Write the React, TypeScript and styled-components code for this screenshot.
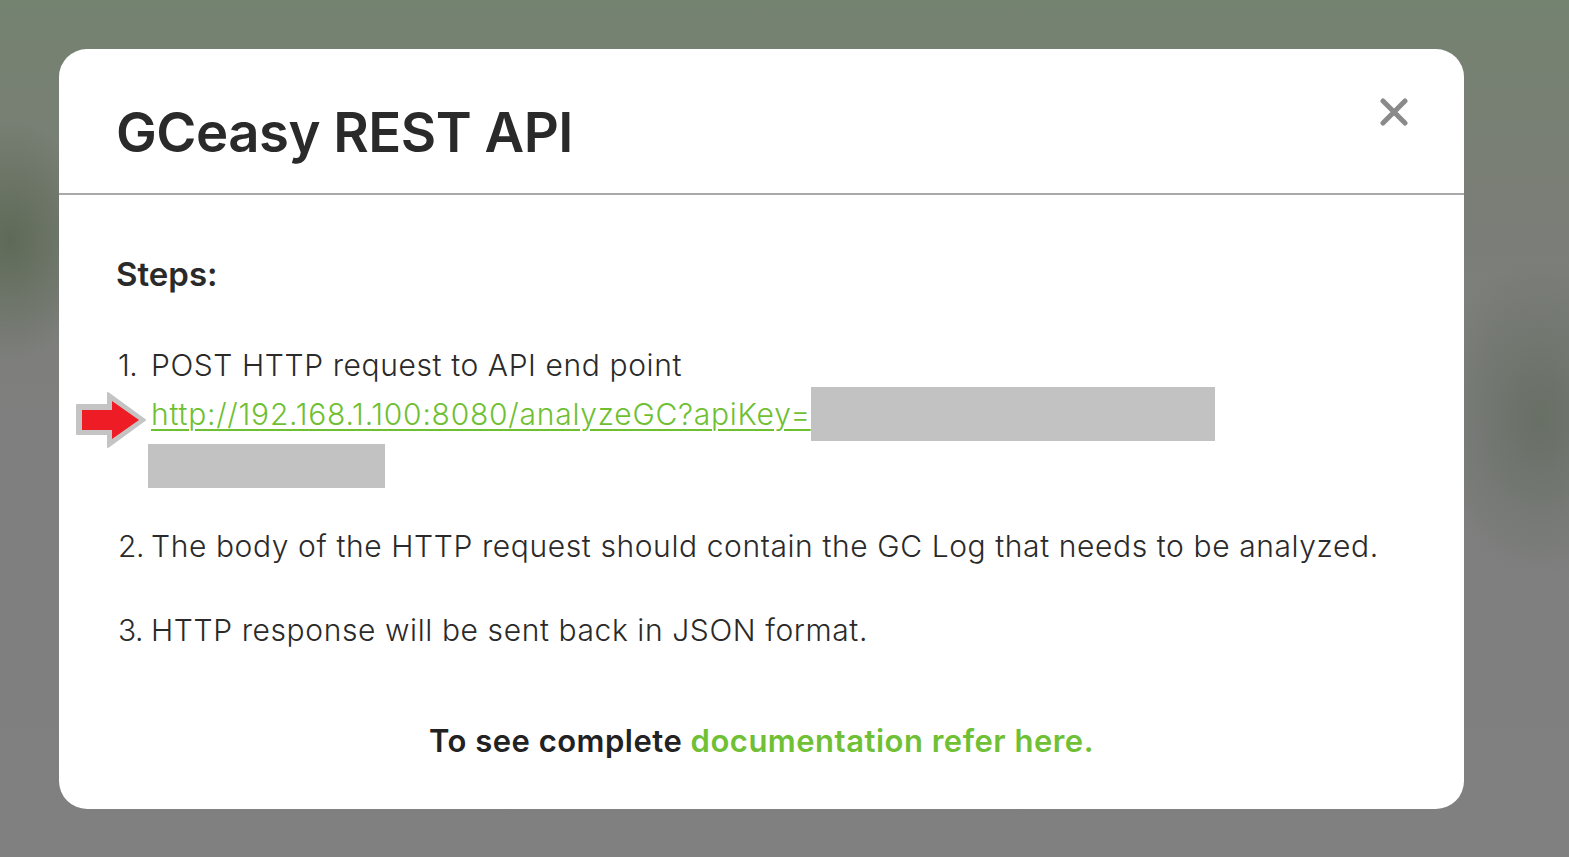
import React from 'react';
import styled, { createGlobalStyle } from 'styled-components';

const GlobalStyle = createGlobalStyle`
  html, body {
    margin: 0;
    padding: 0;
    height: 100%;
  }
  body {
    font-family: Inter, "Noto Sans", "Liberation Sans", sans-serif;
    color: #222;
  }
`;

const Backdrop = styled.div`
  width: 1569px;
  height: 857px;
  box-sizing: border-box;
  padding: 49px 0 0 59px;
  overflow: hidden;
  background:
    radial-gradient(ellipse 90px 120px at 10px 240px, rgba(70, 90, 60, 0.55), transparent 100%),
    radial-gradient(ellipse 110px 160px at 1540px 420px, rgba(80, 95, 75, 0.5), transparent 100%),
    linear-gradient(180deg, #748270 0%, #7a7e76 22%, #7f7f7f 50%, #808080 100%);
`;

const Modal = styled.div`
  width: 1405px;
  height: 760px;
  background: #fff;
  border-radius: 28px;
  display: flex;
  flex-direction: column;
  overflow: hidden;
`;

const Header = styled.div`
  height: 146px;
  box-sizing: border-box;
  border-bottom: 2px solid #a9a9a9;
  padding: 48px 56px 0 57px;
  display: flex;
  justify-content: space-between;
  align-items: flex-start;
`;

const Title = styled.h1`
  margin: 0;
  font-size: 54.5px;
  line-height: 70px;
  font-weight: 600;
  letter-spacing: -0.5px;
  color: #2a2a2a;
`;

const CloseButton = styled.button`
  border: none;
  background: none;
  padding: 0;
  width: 28px;
  height: 28px;
  margin-top: 1px;
  cursor: pointer;
  display: flex;
  align-items: center;
  justify-content: center;
`;

const Body = styled.div`
  flex: 1;
  padding: 59px 57px 0 57px;
  display: flex;
  flex-direction: column;
`;

const StepsHeading = styled.h2`
  margin: 0 0 47px;
  font-size: 33px;
  line-height: 40px;
  font-weight: 600;
  color: #2a2a2a;
`;

const StepList = styled.div`
  display: flex;
  flex-direction: column;
  gap: 36px;
`;

const Step = styled.div`
  display: flex;
  font-size: 30px;
  line-height: 48px;
  font-weight: 300;
  color: #2a2a2a;
  letter-spacing: 0.6px;
`;

const StepNum = styled.span`
  flex: 0 0 33px;
  padding-left: 2px;
  letter-spacing: -0.5px;
`;

const StepText = styled.div`
  flex: 1;
`;

const LinkLine = styled.div`
  position: relative;
  margin-top: -2px;
`;

const ApiLink = styled.a`
  color: #6fbf32;
  letter-spacing: 0.75px;
  text-decoration: underline;
  text-decoration-thickness: 2px;
  text-underline-offset: 4px;
`;

const KeyMask = styled.span`
  display: inline-block;
  width: 404px;
  height: 54px;
  background: #c2c2c2;
  vertical-align: -16px;
`;

const KeyTailMask = styled.span`
  display: block;
  width: 237px;
  height: 44px;
  margin: 3px 0 -2px -3px;
  background: #c2c2c2;
`;

const Arrow = styled.svg`
  position: absolute;
  left: -75px;
  top: 5px;
`;

const Footer = styled.p`
  margin: 68px 0 0;
  text-align: center;
  font-size: 31px;
  font-weight: 600;
  letter-spacing: 0.5px;
  color: #222;
`;

const DocLink = styled.a`
  color: #70c035;
  text-decoration: none;
`;

export default function App() {
  return (
    <>
      <GlobalStyle />
      <Backdrop>
        <Modal>
          <Header>
            <Title>GCeasy REST API</Title>
            <CloseButton aria-label="Close">
              <svg width="28" height="28" viewBox="0 0 28 28">
                <path d="M3 3 L25 25 M25 3 L3 25" stroke="#8a8a8a" strokeWidth="5" strokeLinecap="round" />
              </svg>
            </CloseButton>
          </Header>
          <Body>
            <StepsHeading>Steps:</StepsHeading>
            <StepList>
              <Step>
                <StepNum>1.</StepNum>
                <StepText>
                  POST HTTP request to API end point
                  <LinkLine>
                    <Arrow width="70" height="56" viewBox="-1 -1 70 56">
                      <path d="M0 12 H31 V0 L68 27 L31 54 V41 H0 Z" fill="#c4c4c4" stroke="#c4c4c4" strokeWidth="2" strokeLinejoin="round" />
                      <path d="M5 17 H35 V8 L62 27 L35 46 V37 H5 Z" fill="#ee1c25" />
                    </Arrow>
                    <ApiLink href="#">http://192.168.1.100:8080/analyzeGC?apiKey=</ApiLink>
                    <KeyMask />
                    <KeyTailMask />
                  </LinkLine>
                </StepText>
              </Step>
              <Step>
                <StepNum>2.</StepNum>
                <StepText>The body of the HTTP request should contain the GC Log that needs to be analyzed.</StepText>
              </Step>
              <Step>
                <StepNum>3.</StepNum>
                <StepText>HTTP response will be sent back in JSON format.</StepText>
              </Step>
            </StepList>
            <Footer>
              To see complete <DocLink href="#">documentation refer here.</DocLink>
            </Footer>
          </Body>
        </Modal>
      </Backdrop>
    </>
  );
}
